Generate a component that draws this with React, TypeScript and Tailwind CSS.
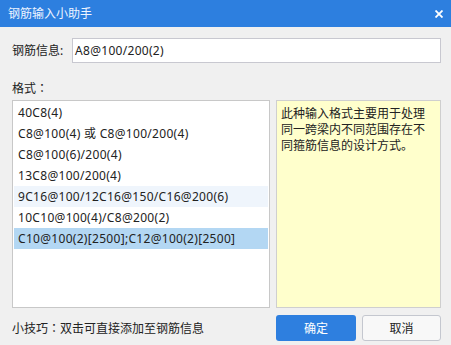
import React from "react";

const items = [
  "40C8(4)",
  "C8@100(4) 或 C8@100/200(4)",
  "C8@100(6)/200(4)",
  "13C8@100/200(4)",
  "9C16@100/12C16@150/C16@200(6)",
  "10C10@100(4)/C8@200(2)",
  "C10@100(2)[2500];C12@100(2)[2500]",
];

const tcColon = { fontFamily: '"Noto Sans CJK TC", sans-serif' };

export default function App() {
  return (
    <div
      className="w-[451px] h-[345px] bg-[#f0f0f0] flex flex-col text-[12px] text-[#222] overflow-hidden"
      style={{ fontFamily: '"Noto Sans", "Noto Sans CJK SC", sans-serif' }}
    >
      <div className="h-[27px] bg-[#2d7fdf] flex items-center justify-between pl-2 pr-[8px] shrink-0">
        <span className="text-[#eef4ff] leading-[16px]">钢筋输入小助手</span>
        <svg width="8" height="8" viewBox="0 0 8 8">
          <path d="M0.5 0.5 L7.5 7.5 M7.5 0.5 L0.5 7.5" stroke="white" strokeWidth="1.8" />
        </svg>
      </div>
      <div className="flex-1 pl-3 pr-[10px] flex flex-col">
        <div className="mt-[11px] h-[25px] flex items-center">
          <span className="w-[60px] leading-[17px]">钢筋信息:</span>
          <div className="flex-1 h-[25px] border border-[#c8c8d0] bg-white pl-[2px] flex items-center leading-[17px] tracking-[0.3px]">
            A8@100/200(2)
          </div>
        </div>
        <div className="mt-[16px] h-[17px] leading-[17px]">
          格式<span style={tcColon}>：</span>
        </div>
        <div className="mt-[4px] h-[208px] flex gap-[6px]">
          <div className="w-[258px] border border-[#c8c8c8] bg-white p-px flex flex-col">
            {items.map((t, i) => (
              <div
                key={i}
                className={
                  "h-[21px] pl-1 flex items-center leading-[17px] whitespace-nowrap tracking-[0.3px] " +
                  (i === 4 ? "bg-[#eff5fc]" : i === 6 ? "bg-[#b3d7f3]" : "")
                }
              >
                {t}
              </div>
            ))}
          </div>
          <div className="flex-1 border border-[#cfcfcf] bg-[#ffffcc] pl-[4px] pr-[4px] pt-[5px] leading-[16px]">
            此种输入格式主要用于处理同一跨梁内不同范围存在不同箍筋信息的设计方式。
          </div>
        </div>
        <div className="mt-[7px] h-[26px] flex items-center">
          <span className="flex-1 leading-[17px]">
            小技巧<span style={tcColon}>：</span>双击可直接添加至钢筋信息
          </span>
          <button className="w-[80px] h-[26px] rounded-[3px] bg-[#2e7fdf] text-white leading-[17px]">
            确定
          </button>
          <button className="ml-[6px] w-[79px] h-[26px] rounded-[3px] border border-[#c4c7cf] bg-[#f8f8f8] text-[#222] leading-[17px]">
            取消
          </button>
        </div>
      </div>
    </div>
  );
}
